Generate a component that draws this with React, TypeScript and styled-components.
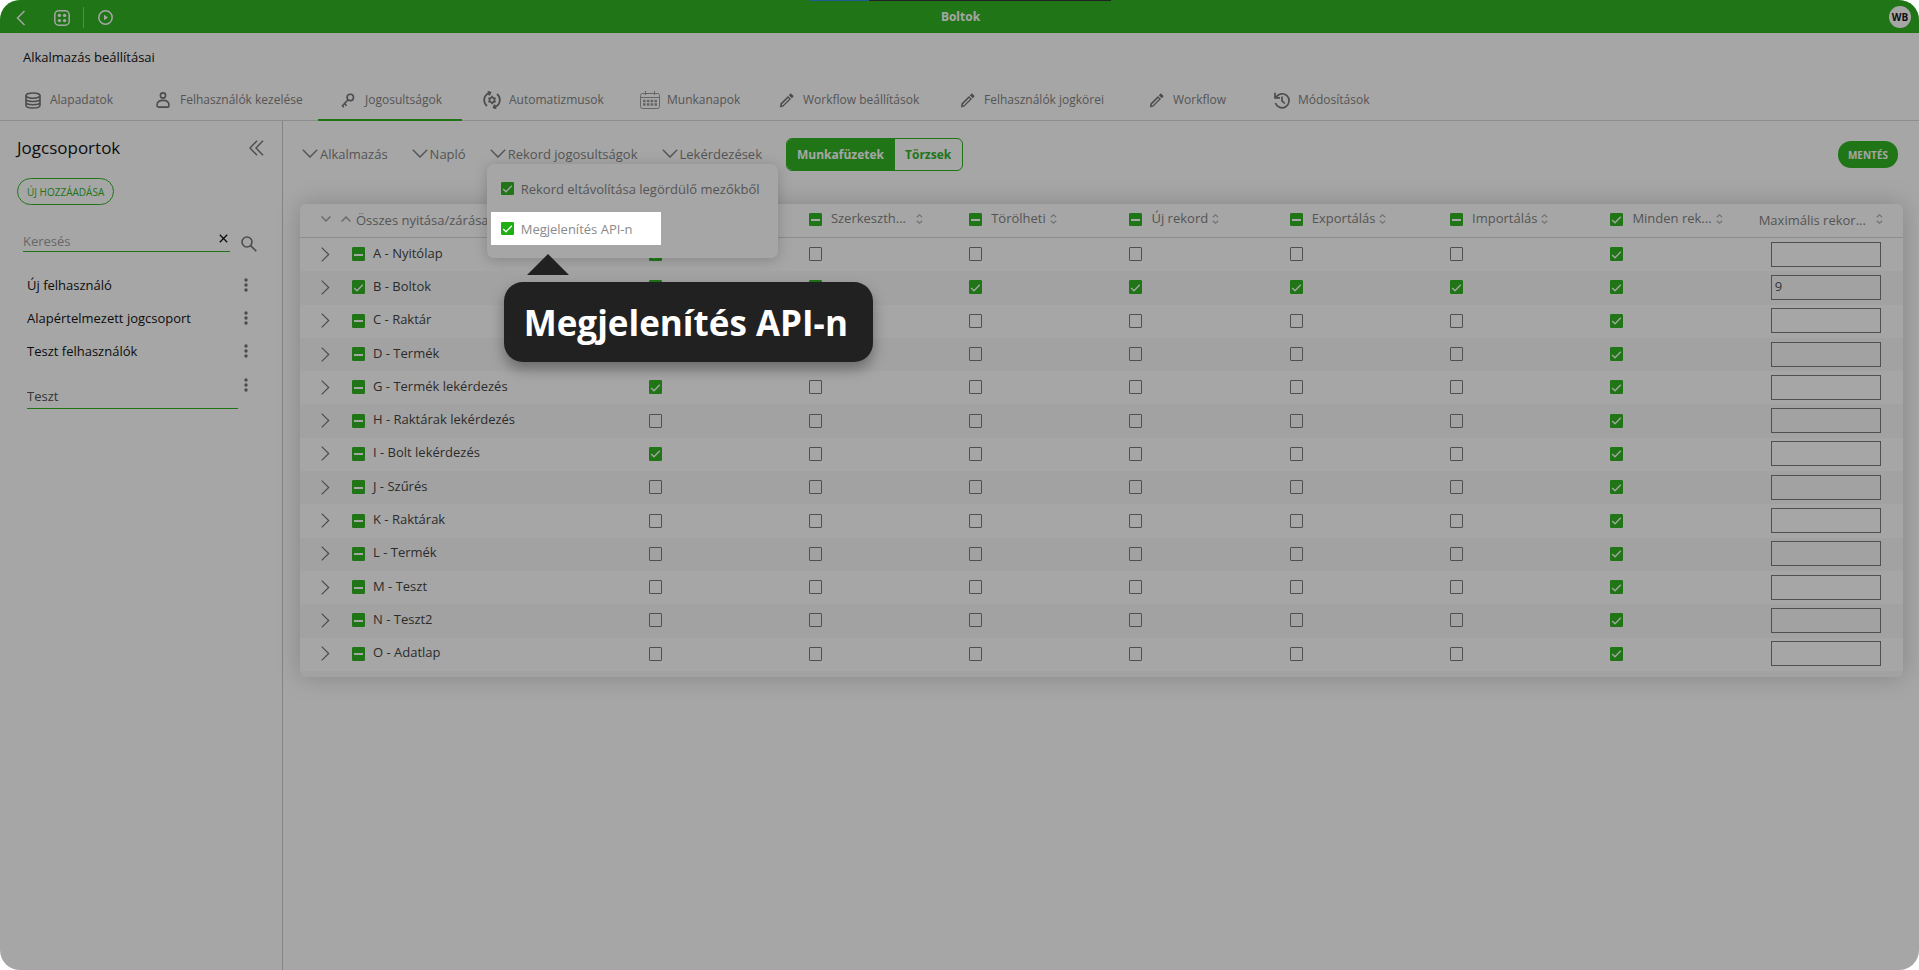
import React, { ReactNode, useEffect, useRef, useState } from "react";
import styled, { createGlobalStyle, css } from "styled-components";

const green = "#20ae12";
const grey = "#787878";
const line = "#d6d6d6";
const shade = "rgba(33, 33, 33, 0.4)";

const GlobalStyle = createGlobalStyle`
  *, *::before, *::after { box-sizing: border-box; }
  body { margin: 0; background: #fff; }
  body, button, input { font-family: "Open Sans", "Noto Sans", sans-serif; }
  button { padding: 0; border: 0; background: none; cursor: pointer; color: inherit; }
  svg { display: block; flex: none; }
`;

const Page = styled.div`
  position: relative;
  display: flex;
  flex-direction: column;
  min-height: 100vh;
  overflow: hidden;
  border-radius: 20px;
  background: #fff;
  color: #000;
  font-size: 13px;
  line-height: 20px;
`;

/* ---------- Top bar ---------- */

const TopBar = styled.header`
  position: relative;
  display: grid;
  grid-template-columns: 1fr auto 1fr;
  align-items: center;
  height: 33px;
  padding: 0 8px 0 16px;
  background: ${green};
  color: #fff;
`;

const TopActions = styled.div`
  display: flex;
  align-items: center;
  padding-top: 2px;
`;

const TopButton = styled.button<{ $gap: number }>`
  display: flex;
  margin-right: ${(p) => p.$gap}px;
`;

const TopDivider = styled.span`
  width: 1px;
  height: 21px;
  margin-right: 14px;
  background: #7fcf77;
`;

const AppName = styled.h1`
  margin: 0;
  padding-right: 6px;
  font-size: 12px;
  font-weight: 700;
`;

const Avatar = styled.button`
  justify-self: end;
  width: 22px;
  height: 22px;
  border-radius: 50%;
  background: #fff;
  color: #000;
  font-size: 10px;
  font-weight: 700;
  line-height: 22px;
`;

const LoadStrip = styled.div`
  position: absolute;
  top: 0;
  left: 50%;
  width: 302px;
  height: 1px;
  margin-left: -151px;
  background: linear-gradient(to right, #1a84dd 60px, #222 60px);
`;

/* ---------- Settings tabs ---------- */

const SettingsTitle = styled.h2`
  margin: 0;
  padding: 14px 23px 15px;
  font-size: 13px;
  font-weight: 400;
`;

const Tabs = styled.nav`
  display: flex;
  height: 39px;
  padding-left: 3px;
  border-bottom: 1px solid ${line};
`;

const Tab = styled.button<{ $width: number; $active?: boolean }>`
  display: flex;
  align-items: center;
  gap: 5px;
  width: ${(p) => p.$width}px;
  height: 39px;
  padding: 0 0 1px 18px;
  border-bottom: 2px solid ${(p) => (p.$active ? green : "transparent")};
  color: ${grey};
  font-size: 12px;
  line-height: 20px;
  white-space: nowrap;
`;

const TabIcon = styled.span`
  display: flex;
  justify-content: center;
  width: 24px;
  color: #6a6a6a;
`;

/* ---------- Sidebar ---------- */

const Body = styled.div`
  display: flex;
  flex: 1;
`;

const Sidebar = styled.aside`
  display: flex;
  flex-direction: column;
  align-items: flex-start;
  flex: none;
  width: 283px;
  padding: 15px 18px 15px 17px;
  border-right: 1px solid #c8c8c8;
`;

const SidebarHead = styled.div`
  display: flex;
  justify-content: space-between;
  align-items: center;
  width: 100%;
  height: 24px;
`;

const SidebarTitle = styled.h3`
  margin: 0;
  font-size: 17px;
  font-weight: 400;
`;

const AddButton = styled.button`
  height: 27px;
  margin-top: 18px;
  padding: 0 9px;
  border: 1px solid ${green};
  border-radius: 14px;
  color: ${green};
  font-size: 10px;
`;

const SearchRow = styled.div`
  display: flex;
  align-items: flex-end;
  gap: 11px;
  width: 100%;
  margin-top: 25px;
  padding: 0 7px 0 6px;
  color: #6a6a6a;
`;

const SearchField = styled.div`
  display: flex;
  align-items: center;
  flex: 1;
  height: 22px;
  border-bottom: 1px solid ${green};
`;

const SearchInput = styled.input`
  flex: 1;
  min-width: 0;
  height: 20px;
  padding: 0;
  border: 0;
  outline: 0;
  background: none;
  font-size: 13px;
  &::placeholder { color: #969696; opacity: 1; }
`;

const ClearButton = styled.button`
  display: flex;
  margin: 0 2px 4px 0;
  color: #000;
`;

const GroupList = styled.ul`
  width: 100%;
  margin: 16px 0 0;
  padding: 0 0 0 10px;
  list-style: none;
`;

const Group = styled.li`
  display: flex;
  align-items: center;
  justify-content: space-between;
  height: 33px;
  padding-right: 16px;
`;

const GroupEdit = styled.li`
  display: flex;
  align-items: flex-start;
  gap: 6px;
  padding: 11px 16px 0 0;
`;

const GroupInput = styled.input`
  flex: 1;
  min-width: 0;
  height: 31px;
  padding: 5px 0 0;
  border: 0;
  border-bottom: 1px solid ${green};
  outline: 0;
  background: none;
  color: #444;
  font-size: 13px;
`;

const MoreButton = styled.button`
  display: flex;
  color: #6a6a6a;
`;

/* ---------- Main area ---------- */

const Main = styled.main`
  flex: 1;
  min-width: 0;
  padding: 17px 16px 30px 17px;
`;

const Toolbar = styled.div`
  display: flex;
  align-items: center;
  height: 33px;
  padding: 0 5px 0 2px;
`;

const MenuButton = styled.button`
  display: flex;
  align-items: center;
  gap: 2px;
  height: 33px;
  margin-right: 24px;
  padding-bottom: 2px;
  color: ${grey};
  font-size: 13px;
  line-height: 20px;
  white-space: nowrap;
`;

const MenuAnchor = styled.div`
  position: relative;
`;

const Segments = styled.div`
  display: flex;
  overflow: hidden;
  height: 33px;
  margin-right: auto;
  border: 1px solid ${green};
  border-radius: 6px;
`;

const Segment = styled.button<{ $on?: boolean }>`
  padding: 0 11px 0 10px;
  background: ${(p) => (p.$on ? green : "transparent")};
  color: ${(p) => (p.$on ? "#fff" : green)};
  font-size: 12px;
  font-weight: 700;
`;

const SaveButton = styled.button`
  height: 27px;
  padding: 0 10px;
  border-radius: 13px;
  background: ${green};
  color: #fff;
  font-size: 10px;
  font-weight: 700;
`;

/* ---------- Drop-down, spotlight and callout ---------- */

const Menu = styled.div`
  position: absolute;
  z-index: 5;
  top: 26px;
  left: -3px;
  display: flex;
  flex-direction: column;
  gap: 7px;
  width: 291px;
  height: 94px;
  padding: 8px 4px;
  border-radius: 7px;
  background: #fff;
  box-shadow: 0 2px 14px rgba(0, 0, 0, 0.22);
`;

const MenuItem = styled.label<{ $spot?: boolean }>`
  position: relative;
  display: flex;
  align-items: center;
  align-self: flex-start;
  gap: 7px;
  height: 33px;
  padding-left: 10px;
  color: ${grey};
  font-weight: 500;
  white-space: nowrap;
  ${(p) =>
    p.$spot &&
    css`
      width: 170px;
      background: #fff;
      color: #8a8a8a;
      box-shadow: 0 0 0 3000px ${shade};
    `}
`;

const Callout = styled.div`
  position: absolute;
  top: 70px;
  left: 13px;
  height: 80px;
  padding: 0 25px 0 20px;
  border-radius: 19px;
  background: #212121;
  box-shadow: 0 7px 14px rgba(0, 0, 0, 0.35);
  color: #fff;
  font-size: 35px;
  font-weight: 700;
  line-height: 82px;
  &::before {
    content: "";
    position: absolute;
    top: -28px;
    left: 23px;
    border: solid transparent;
    border-width: 0 21px 21px;
    border-bottom-color: #212121;
  }
`;

/* ---------- Check box ---------- */

const CheckWrap = styled.span`
  display: inline-grid;
  flex: none;
  width: 13px;
  vertical-align: top;
  > * { grid-area: 1 / 1; }
  svg { pointer-events: none; align-self: center; }
`;

const CheckInput = styled.input<{ $filled: boolean; $tall?: boolean }>`
  appearance: none;
  width: 13px;
  height: ${(p) => (p.$tall ? 14 : 13)}px;
  margin: 0;
  border: 1px solid ${(p) => (p.$filled ? green : "#707070")};
  border-radius: 1px;
  background: ${(p) => (p.$filled ? green : "transparent")};
`;

/* ---------- Table ---------- */

const Card = styled.div`
  overflow: hidden;
  margin-top: 33px;
  padding-bottom: 6px;
  border-radius: 6px;
  background: linear-gradient(to bottom, #fff 40px, #f9f9f9 40px);
`;

const CardShadow = styled.div`
  border-radius: 6px;
  box-shadow: 0 0 24px rgba(0, 0, 0, 0.22);
`;

const Table = styled.table`
  width: 100%;
  height: 467px;
  border-spacing: 0;
  table-layout: fixed;
  background: #fff;
  color: #333;
`;

const HeadCell = styled.th<{ $wide?: boolean; $inset?: number }>`
  width: ${(p) => (p.$wide ? 20 : 10)}%;
  height: 34px;
  padding: 0 0 3px ${(p) => p.$inset ?? 28}px;
  border-bottom: 1px solid ${line};
  color: ${grey};
  font-weight: 400;
  text-align: left;
`;

const HeadContent = styled.div`
  display: flex;
  align-items: center;
  white-space: nowrap;
`;

const HeadText = styled.span<{ $low?: boolean }>`
  margin: 0 4px 0 ${(p) => (p.$low ? 0 : 9)}px;
  padding-${(p) => (p.$low ? "top" : "bottom")}: 2px;
`;

const SortButton = styled.button<{ $far?: boolean }>`
  display: flex;
  margin-left: ${(p) => (p.$far ? 6 : 0)}px;
  color: #aaa;
`;

const ToggleAll = styled.button`
  display: flex;
  width: 20px;
  color: #999;
  & + & { width: 15px; }
`;

const Row = styled.tr`
  &:nth-child(even) { background: #f9f9f9; }
`;

const Cell = styled.td<{ $inset?: number }>`
  height: 33px;
  padding: 0 0 1px ${(p) => p.$inset ?? 28}px;
  line-height: 0;
`;

const NameCell = styled.div`
  display: flex;
  align-items: center;
  line-height: 20px;
`;

const Expand = styled.button`
  display: flex;
  width: 31px;
  color: #6a6a6a;
`;

const RowName = styled.span`
  padding: 0 0 3px 8px;
`;

const LimitInput = styled.input`
  width: 110px;
  height: 25px;
  padding: 0 3px 2px;
  border: 1px solid #707070;
  outline: 0;
  background: none;
  color: #444;
  font-size: 13px;
`;

/* ---------- Icons ---------- */

type StrokeProps = { w: number; h: number; sw?: number; children: ReactNode };
const Stroke = ({ w, h, sw = 2, children }: StrokeProps) => (
  <svg width={w} height={h} viewBox={`0 0 ${w} ${h}`} fill="none" stroke="currentColor" strokeWidth={sw} aria-hidden="true">
    {children}
  </svg>
);

const BackIcon = () => <Stroke w={10} h={16} sw={1.5}><path d="M8.5 1 1.5 8l7 7" /></Stroke>;
const GridIcon = () => (
  <Stroke w={16} h={16} sw={1.5}>
    <rect x="0.8" y="0.8" width="14.4" height="14.4" rx="4" />
    <g fill="currentColor" stroke="none">
      <circle cx="5.4" cy="5.4" r="1.7" /><circle cx="10.6" cy="5.4" r="1.7" />
      <circle cx="5.4" cy="10.6" r="1.7" /><circle cx="10.6" cy="10.6" r="1.7" />
    </g>
  </Stroke>
);
const PlayIcon = () => (
  <Stroke w={15} h={15} sw={1.5}>
    <circle cx="7.5" cy="7.5" r="6.7" /><path d="M6 4.8v5.4l4-2.7z" fill="currentColor" stroke="none" />
  </Stroke>
);
const DatabaseIcon = () => (
  <Stroke w={16} h={17} sw={1.6}>
    <ellipse cx="8" cy="3.6" rx="7" ry="2.6" />
    <path d="M1 3.6v9.6c0 1.6 3 2.8 7 2.8s7-1.2 7-2.8V3.6M1 7c0 1.5 3 2.5 7 2.5S15 8.5 15 7M1 10.3c0 1.5 3 2.5 7 2.5s7-1 7-2.5" />
  </Stroke>
);
const PersonIcon = () => (
  <Stroke w={14} h={16} sw={1.6}>
    <circle cx="7" cy="3.5" r="2.6" /><path d="M1 13.400C1 10.400 3.300 8.400 7 8.400s6 2 6 5c0 1-.5 1.700-1.400 1.700H2.400C1.500 15.100 1 14.400 1 13.400z" />
  </Stroke>
);
const KeyIcon = () => (
  <Stroke w={14} h={15} sw={1.6}>
    <circle cx="9.300" cy="4.400" r="3.200" /><path d="M7 6.800 1 13.200M3.600 10.600l2 2.200M1.400 12.700l1.400 1.500" />
  </Stroke>
);
const AutomateIcon = () => (
  <Stroke w={18} h={18} sw={1.7}>
    <circle cx="9" cy="9" r="2.500" />
    <path d="M9 4.800v1.500M9 11.700v1.500M5.400 6.900l1.300.8M11.300 10.300l1.300.8M5.400 11.100l1.300-.8M11.300 7.700l1.300-.8" />
    <path d="M4 15C.2 11.800.2 6.400 4 3.200l3-1.400M4.600.6 7.400 1.600 6.200 4.300M14 3c3.800 3.200 3.800 8.600 0 11.800l-3 1.400M13.400 17.400l-2.800-1 1.200-2.700" />
  </Stroke>
);
const CalendarIcon = () => (
  <svg width="20" height="18" viewBox="0 0 20 18" fill="none" stroke="#949494" aria-hidden="true">
    <rect x="0.5" y="2.5" width="19" height="15" rx="2" /><path d="M.5 6.500h19M5.500 0v4M14.500 0v4" />
    <path d="M3 10h14M3 13.500h14" strokeWidth="2.500" strokeDasharray="2.600 1.200" />
  </svg>
);
const PencilIcon = () => (
  <svg width="15" height="15" viewBox="0 0 15 15" fill="currentColor" aria-hidden="true">
    <path fillRule="evenodd" d="M1.400 10.600 9 3l3 3-7.600 7.600-3.400.8zM3 11.300l-.3 1.200 1.200-.3 6.200-6.200-.9-.9z" />
    <path d="M9.800 2.200 11.100.9c.4-.4 1-.4 1.400 0l1.600 1.600c.4.4.4 1 0 1.400l-1.300 1.300z" />
  </svg>
);
const HistoryIcon = () => (
  <Stroke w={17} h={17} sw={1.7}>
    <path d="M3 5.200A7 7 0 1 1 2.400 11M2 .8V5.800h5M9 4.600v4.300l2.800 2.600" />
  </Stroke>
);
const CollapseIcon = () => <Stroke w={15} h={16} sw={1.4}><path d="M8 .8 1 8l7 7.200M14 .8 7 8l7 7.200" /></Stroke>;
const CloseIcon = () => <Stroke w={9} h={9} sw={1.3}><path d="m.8.8 7.400 7.400M8.200.8.8 8.200" /></Stroke>;
const SearchIcon = () => <Stroke w={16} h={16} sw={1.6}><circle cx="6" cy="6" r="5" /><path d="m9.600 9.600 5.700 5.700" /></Stroke>;
const DotsIcon = () => (
  <svg width="4" height="14" viewBox="0 0 4 14" fill="currentColor" aria-hidden="true">
    <circle cx="2" cy="2" r="1.700" /><circle cx="2" cy="7" r="1.700" /><circle cx="2" cy="12" r="1.700" />
  </svg>
);
const DownIcon = () => <Stroke w={16} h={9} sw={1.4}><path d="m.8.7 7.200 7.400L15.200.7" /></Stroke>;
const NextIcon = () => <Stroke w={9} h={15} sw={1.2}><path d="m.7.6 7 6.900-7 6.900" /></Stroke>;
const SmallDown = () => <Stroke w={10} h={6} sw={1.4}><path d="m.6.600 4.400 4.400L9.400.6" /></Stroke>;
const SmallUp = () => <Stroke w={10} h={6} sw={1.4}><path d="M.6 5.400 5 1l4.400 4.400" /></Stroke>;
const SortIcon = () => <Stroke w={7} h={10} sw={1.2}><path d="M.8 3.200 3.500.8l2.700 2.400M.8 6.800l2.700 2.400 2.700-2.400" /></Stroke>;

/* ---------- Parts ---------- */

type State = 0 | 1 | 2; // empty, ticked, partly ticked

function Check({ initial, label, tall }: { initial: State; label?: string; tall?: boolean }) {
  const [state, setState] = useState<State>(initial);
  const ref = useRef<HTMLInputElement>(null);
  useEffect(() => {
    if (ref.current) ref.current.indeterminate = state === 2;
  }, [state]);
  return (
    <CheckWrap>
      <CheckInput
        ref={ref}
        type="checkbox"
        aria-label={label}
        checked={state === 1}
        onChange={() => setState(state === 1 ? 0 : 1)}
        $filled={state !== 0}
        $tall={tall}
      />
      {state !== 0 && (
        <svg width="13" height="13" viewBox="0 0 13 13" fill="none" stroke="#fff">
          {state === 1 ? <path d="m2.200 7 2.800 2.800 5.800-6" strokeWidth="1.300" /> : <path d="M2 7h9" strokeWidth="2" />}
        </svg>
      )}
    </CheckWrap>
  );
}

const tabs: [string, number, ReactNode][] = [
  ["Alapadatok", 130, <DatabaseIcon />],
  ["Felhasználók kezelése", 185, <PersonIcon />],
  ["Jogosultságok", 144, <KeyIcon />],
  ["Automatizmusok", 158, <AutomateIcon />],
  ["Munkanapok", 136, <CalendarIcon />],
  ["Workflow beállítások", 181, <PencilIcon />],
  ["Felhasználók jogkörei", 189, <PencilIcon />],
  ["Workflow", 125, <PencilIcon />],
  ["Módosítások", 144, <HistoryIcon />],
];

const columns: [string, State, boolean][] = [
  ["Láthatja", 2, false],
  ["Szerkeszth...", 2, true],
  ["Törölheti", 2, false],
  ["Új rekord", 2, false],
  ["Exportálás", 2, false],
  ["Importálás", 2, false],
  ["Minden rek...", 1, false],
];

const rows: [string, State, State[], string][] = [
  ["A - Nyitólap", 2, [1, 0, 0, 0, 0, 0, 1], ""],
  ["B - Boltok", 1, [1, 1, 1, 1, 1, 1, 1], "9"],
  ["C - Raktár", 2, [0, 0, 0, 0, 0, 0, 1], ""],
  ["D - Termék", 2, [0, 0, 0, 0, 0, 0, 1], ""],
  ["G - Termék lekérdezés", 2, [1, 0, 0, 0, 0, 0, 1], ""],
  ["H - Raktárak lekérdezés", 2, [0, 0, 0, 0, 0, 0, 1], ""],
  ["I - Bolt lekérdezés", 2, [1, 0, 0, 0, 0, 0, 1], ""],
  ["J - Szűrés", 2, [0, 0, 0, 0, 0, 0, 1], ""],
  ["K - Raktárak", 2, [0, 0, 0, 0, 0, 0, 1], ""],
  ["L - Termék", 2, [0, 0, 0, 0, 0, 0, 1], ""],
  ["M - Teszt", 2, [0, 0, 0, 0, 0, 0, 1], ""],
  ["N - Teszt2", 2, [0, 0, 0, 0, 0, 0, 1], ""],
  ["O - Adatlap", 2, [0, 0, 0, 0, 0, 0, 1], ""],
];

const groups = ["Új felhasználó", "Alapértelmezett jogcsoport", "Teszt felhasználók"];

export default function App() {
  return (
    <Page>
      <GlobalStyle />
      <TopBar>
        <TopActions>
          <TopButton $gap={28} aria-label="Vissza"><BackIcon /></TopButton>
          <TopButton $gap={13} aria-label="Alkalmazások"><GridIcon /></TopButton>
          <TopDivider />
          <TopButton $gap={0} aria-label="Lejátszás"><PlayIcon /></TopButton>
        </TopActions>
        <AppName>Boltok</AppName>
        <Avatar>WB</Avatar>
        <LoadStrip />
      </TopBar>

      <SettingsTitle>Alkalmazás beállításai</SettingsTitle>
      <Tabs>
        {tabs.map(([name, width, icon], i) => (
          <Tab key={name} $width={width} $active={i === 2}>
            <TabIcon>{icon}</TabIcon>
            {name}
          </Tab>
        ))}
      </Tabs>

      <Body>
        <Sidebar>
          <SidebarHead>
            <SidebarTitle>Jogcsoportok</SidebarTitle>
            <MoreButton aria-label="Összecsukás"><CollapseIcon /></MoreButton>
          </SidebarHead>
          <AddButton>ÚJ HOZZÁADÁSA</AddButton>
          <SearchRow>
            <SearchField>
              <SearchInput placeholder="Keresés" aria-label="Keresés" />
              <ClearButton aria-label="Törlés"><CloseIcon /></ClearButton>
            </SearchField>
            <SearchIcon />
          </SearchRow>
          <GroupList>
            {groups.map((name) => (
              <Group key={name}>
                {name}
                <MoreButton aria-label="Műveletek"><DotsIcon /></MoreButton>
              </Group>
            ))}
            <GroupEdit>
              <GroupInput defaultValue="Teszt" aria-label="Csoport neve" />
              <MoreButton aria-label="Műveletek"><DotsIcon /></MoreButton>
            </GroupEdit>
          </GroupList>
        </Sidebar>

        <Main>
          <Toolbar>
            <MenuButton><DownIcon />Alkalmazás</MenuButton>
            <MenuButton><DownIcon />Napló</MenuButton>
            <MenuAnchor>
              <MenuButton><DownIcon />Rekord jogosultságok</MenuButton>
              <Menu>
                <MenuItem><Check initial={1} />Rekord eltávolítása legördülő mezőkből</MenuItem>
                <MenuItem $spot>
                  <Check initial={1} />Megjelenítés API-n
                  <Callout role="tooltip">Megjelenítés API-n</Callout>
                </MenuItem>
              </Menu>
            </MenuAnchor>
            <MenuButton><DownIcon />Lekérdezések</MenuButton>
            <Segments>
              <Segment $on>Munkafüzetek</Segment>
              <Segment>Törzsek</Segment>
            </Segments>
            <SaveButton>MENTÉS</SaveButton>
          </Toolbar>

          <CardShadow>
            <Card>
              <Table>
                <thead>
                  <tr>
                    <HeadCell $wide $inset={21}>
                      <HeadContent>
                        <ToggleAll aria-label="Összes nyitása"><SmallDown /></ToggleAll>
                        <ToggleAll aria-label="Összes zárása"><SmallUp /></ToggleAll>
                        <HeadText $low>Összes nyitása/zárása</HeadText>
                      </HeadContent>
                    </HeadCell>
                    {columns.map(([name, state, far]) => (
                      <HeadCell key={name}>
                        <HeadContent>
                          <Check initial={state} label={name} />
                          <HeadText>{name}</HeadText>
                          <SortButton $far={far} aria-label="Rendezés"><SortIcon /></SortButton>
                        </HeadContent>
                      </HeadCell>
                    ))}
                    <HeadCell $inset={16}>
                      <HeadContent>
                        <HeadText $low>Maximális rekor...</HeadText>
                        <SortButton $far aria-label="Rendezés"><SortIcon /></SortButton>
                      </HeadContent>
                    </HeadCell>
                  </tr>
                </thead>
                <tbody>
                  {rows.map(([name, state, cells, limit]) => (
                    <Row key={name}>
                      <Cell $inset={21}>
                        <NameCell>
                          <Expand aria-label="Kinyitás"><NextIcon /></Expand>
                          <Check initial={state} label={name} tall />
                          <RowName>{name}</RowName>
                        </NameCell>
                      </Cell>
                      {cells.map((value, i) => (
                        <Cell key={i}><Check initial={value} label={`${name}: ${columns[i][0]}`} tall /></Cell>
                      ))}
                      <Cell><LimitInput defaultValue={limit} aria-label={`${name}: maximális rekordszám`} /></Cell>
                    </Row>
                  ))}
                </tbody>
              </Table>
            </Card>
          </CardShadow>
        </Main>
      </Body>
    </Page>
  );
}
